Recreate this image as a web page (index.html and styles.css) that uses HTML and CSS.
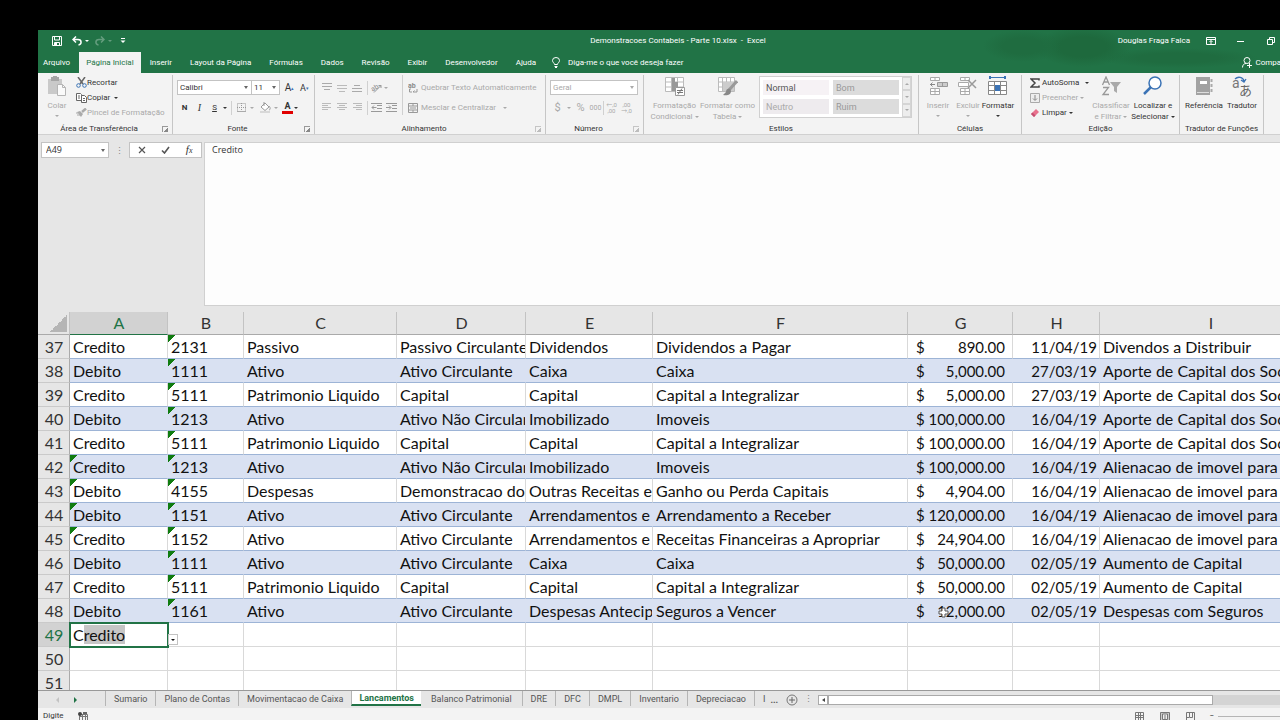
FILE: index.html
```html
<!DOCTYPE html>
<html lang="pt-BR">
<head>
  <meta charset="UTF-8" />
  <meta name="viewport" content="width=device-width, initial-scale=1.0"/>
  <title>Demonstracoes Contabeis - Parte 10.xlsx - Excel</title>
  <link rel="stylesheet" href="styles.css">
</head>
<body>
<div class="app">

  <header class="top">
    <div class="titlebar">
      <div class="quick">
        <button aria-label="Salvar"><svg width="10" height="10" viewBox="0 0 10 10"><path d="M.5.5h9v9h-9zM2.500.5v3.500h5V.5M2.500 9.500V6.500h5v3" fill="none" stroke="#fff"/><path d="M3 7h2v2H3z" fill="#fff"/></svg></button>
        <button aria-label="Desfazer"><svg width="10" height="10" viewBox="0 0 10 10"><path d="M4 .5L1 3.500l3 3M1.500 3.500h4.500c4 0 4 5 .5 5.500" fill="none" stroke="#fff" stroke-width="1.500"/></svg></button><i class="arr"></i>
        <button class="faded redo" aria-label="Refazer"><svg width="10" height="10" viewBox="0 0 10 10"><path d="M6 .5l3 3-3 3M8.500 3.500H4C0 3.500 0 8.500 3.500 9" fill="none" stroke="#fff" stroke-width="1.500"/></svg></button><i class="arr faded"></i>
        <button class="more" aria-label="Personalizar"><svg width="6" height="6" viewBox="0 0 6 6"><path d="M1 .5h4" stroke="#fff"/><path d="M.5 2.500h5L3 5z" fill="#fff"/></svg></button>
      </div>
      <div class="title">Demonstracoes Contabeis - Parte 10.xlsx&nbsp; -&nbsp; Excel</div>
      <div class="window">
        <span class="user">Douglas Fraga Falca</span>
        <button aria-label="Opções da faixa"><svg width="10" height="8" viewBox="0 0 10 8"><path d="M.5.5h9v7h-9zM.5 2.500h9M5 7V3.500M3.500 5L5 3.500 6.500 5" fill="none" stroke="#fff"/></svg></button>
        <button aria-label="Minimizar"><svg width="8" height="8" viewBox="0 0 8 8"><path d="M0 4.500h7" stroke="#fff"/></svg></button>
        <button aria-label="Restaurar"><svg width="8" height="8" viewBox="0 0 8 8"><path d="M.5 2.500h5v5h-5zM2.500 2V.5h5v5H6" fill="none" stroke="#fff"/></svg></button>
        <button aria-label="Fechar"><svg width="8" height="8" viewBox="0 0 8 8"><path d="M1 1l6 6M7 1L1 7" stroke="#fff"/></svg></button>
      </div>
    </div>
    <nav class="tabs">
      <button class="file">Arquivo</button>
      <button class="active">Página Inicial</button>
      <button>Inserir</button>
      <button>Layout da Página</button>
      <button>Fórmulas</button>
      <button>Dados</button>
      <button>Revisão</button>
      <button>Exibir</button>
      <button>Desenvolvedor</button>
      <button>Ajuda</button>
      <button class="tell"><svg width="8" height="11" viewBox="0 0 8 11"><path d="M2.500 7.500C2.500 6 .5 5.500.5 3.500a3.500 3 0 0 1 7 0c0 2-2 2.500-2 4zM2.500 9.500h3M3 10.500h2" fill="none" stroke="#fff"/></svg>Diga-me o que você deseja fazer</button>
      <button class="share"><svg width="10" height="11" viewBox="0 0 10 11"><circle cx="5" cy="3.500" r="3" fill="none" stroke="#fff"/><path d="M.5 10.500C.5 8 2 6.500 4 6.500M5 8.500h5M7.500 6v5" fill="none" stroke="#fff"/></svg>Compartilhar</button>
    </nav>
  </header>

  <div class="ribbon">
    <section class="group clipboard">
      <div class="tools">
        <button class="big off"><svg width="20" height="21" viewBox="0 0 20 21"><path d="M1 3h14v15H1z" fill="#c9c9c9"/><path d="M4 1h8v4H4z" fill="#a5a5a5"/><path d="M6 0h4v2H6z" fill="#a5a5a5"/><path d="M10.500 8.500h5l3 3v8h-8z" fill="#fafafa" stroke="#b5b5b5"/><path d="M15.500 8.500v3h3" fill="none" stroke="#b5b5b5"/></svg><span>Colar</span><i class="arr"></i></button>
        <div class="stack">
          <button><svg width="11" height="11" viewBox="0 0 11 11"><path d="M2 0l5 7M9 0L4 7" stroke="#666" stroke-width="1.500"/><circle cx="2.500" cy="8.500" r="1.800" fill="none" stroke="#3b73b5"/><circle cx="8.500" cy="8.500" r="1.800" fill="none" stroke="#3b73b5"/></svg>Recortar</button>
          <button><svg width="11" height="10" viewBox="0 0 11 10"><path d="M.5.5h4l1 1v6h-5zM2 3h2M2 5h2" fill="#fff" stroke="#666"/><path d="M5.500 2.500h3l2 2v5h-5zM7 5.500h2M7 7.500h2" fill="#fff" stroke="#666"/></svg>Copiar<i class="arr wide"></i></button>
          <button class="off"><svg width="11" height="10" viewBox="0 0 11 10"><path d="M1 4l3-1 3 3-2 3z" fill="#aaa"/><path d="M6 4l4-3.500" stroke="#aaa" stroke-width="2.500"/><path d="M0 5h2M1 7h3" stroke="#aaa"/></svg>Pincel de Formatação</button>
        </div>
      </div>
      <footer><span>Área de Transferência</span><button class="launch" aria-label="Mais"></button></footer>
    </section>

    <section class="group font">
      <div class="tools lines">
        <div class="line">
          <label class="combo face"><select aria-label="Fonte"><option>Calibri</option></select></label>
          <label class="combo size"><select aria-label="Tamanho"><option>11</option></select></label>
          <button class="sq grow" aria-label="Aumentar fonte">A<sup>▴</sup></button>
          <button class="sq shrink" aria-label="Diminuir fonte">A<sup>▾</sup></button>
        </div>
        <div class="line">
          <button class="sq"><b>N</b></button>
          <button class="sq"><em>I</em></button>
          <button class="sq"><u>S</u></button><i class="arr"></i>
          <i class="rule"></i>
          <button class="sq off" aria-label="Bordas"><svg width="9" height="9" viewBox="0 0 9 9"><path d="M.5.5h8v8h-8zM4.500 0v9M0 4.500h9" fill="none" stroke="#999" stroke-dasharray="1 1"/><path d="M0 8.500h9" stroke="#aaa"/></svg></button><i class="arr off"></i>
          <button class="sq off" aria-label="Preenchimento"><svg width="11" height="11" viewBox="0 0 11 11"><path d="M1 5l4-4 4 4-4 3.500zM4 0v4" fill="#fff" stroke="#999"/><path d="M9 4c2 2 1 4 0 4" fill="none" stroke="#999"/><path d="M0 9h10v2H0z" fill="#d8d8d8"/></svg></button><i class="arr off"></i>
          <button class="sq color">A</button><i class="arr"></i>
        </div>
      </div>
      <footer><span>Fonte</span><button class="launch" aria-label="Mais"></button></footer>
    </section>

    <section class="group align">
      <div class="tools halves">
        <div class="lines">
          <div class="line off">
            <button class="sq"><svg width="10" height="9" viewBox="0 0 10 9"><path d="M0 .5h10M0 3.500h10M2 6.500h6" stroke="#aaa"/></svg></button>
            <button class="sq"><svg width="10" height="9" viewBox="0 0 10 9"><path d="M0 2.500h10M0 5.500h10M2 8.500h6" stroke="#bbb"/></svg></button>
            <button class="sq"><svg width="10" height="9" viewBox="0 0 10 9"><path d="M2 2.500h6M0 5.500h10M0 8.500h10" stroke="#aaa"/></svg></button>
            <i class="rule"></i>
            <button class="sq"><svg width="12" height="10" viewBox="0 0 12 10"><text x="0" y="7" font-size="7" fill="#888" transform="rotate(-30 4 5)">ab</text><path d="M3 9.500l7-7M7.500 2.500H10V5" fill="none" stroke="#999"/></svg></button><i class="arr"></i>
          </div>
          <div class="line off">
            <button class="sq"><svg width="10" height="9" viewBox="0 0 10 9"><path d="M0 .5h9M0 2.500h6M0 4.500h9M0 6.500h6" stroke="#bbb"/></svg></button>
            <button class="sq"><svg width="10" height="9" viewBox="0 0 10 9"><path d="M0 .5h10M2 2.500h6M0 4.500h10M2 6.500h6" stroke="#bbb"/></svg></button>
            <button class="sq"><svg width="10" height="9" viewBox="0 0 10 9"><path d="M1 .5h9M4 2.500h6M1 4.500h9M4 6.500h6" stroke="#bbb"/></svg></button>
            <i class="rule"></i>
            <button class="sq"><svg width="11" height="9" viewBox="0 0 11 9"><path d="M0 .5h11M6 2.500h5M6 5.500h5M0 8.500h11M1 4.500h4.500M3 2.500l-2 2 2 2" fill="none" stroke="#999"/></svg></button>
            <button class="sq"><svg width="11" height="9" viewBox="0 0 11 9"><path d="M0 .5h11M6 2.500h5M6 5.500h5M0 8.500h11M0 4.500h4.500M3 2.500l2 2-2 2" fill="none" stroke="#999"/></svg></button>
          </div>
        </div>
        <div class="lines wrap">
          <div class="line"><button class="off"><svg width="10" height="10" viewBox="0 0 10 10"><text x="0" y="5" font-size="7" font-weight="700" fill="#888">ab</text><path d="M3 6H1.500v3H4M9 6v3H5M6.500 7.500L5 9" fill="none" stroke="#999"/></svg>Quebrar Texto Automaticamente</button></div>
          <div class="line"><button class="off"><svg width="10" height="10" viewBox="0 0 10 10"><path d="M.5.5h9v9h-9zM0 3h10M0 7h10M5 0v3M5 7v3M2 5h6" fill="none" stroke="#999"/></svg>Mesclar e Centralizar<i class="arr wide"></i></button></div>
        </div>
      </div>
      <footer><span>Alinhamento</span><button class="launch off" aria-label="Mais"></button></footer>
    </section>

    <section class="group number">
      <div class="tools lines">
        <div class="line"><label class="combo general"><select class="off" aria-label="Formato de número"><option>Geral</option></select></label></div>
        <div class="line off">
          <button class="sq money">$</button><i class="arr"></i>
          <button class="sq money">%</button>
          <button class="sq zeros">000</button>
          <i class="rule"></i>
          <button class="sq dec">←,0<br>,00</button>
          <button class="sq dec">,00<br>→,0</button>
        </div>
      </div>
      <footer><span>Número</span><button class="launch off" aria-label="Mais"></button></footer>
    </section>

    <section class="group styles">
      <div class="tools">
        <button class="big off"><svg width="20" height="21" viewBox="0 0 20 21"><path d="M.5 1.500h18v14H.5zM6.500 1v15M12.500 1v15M0 6h18M0 11h18" fill="#fff" stroke="#bbb"/><path d="M7 2h3v4H7zM7 6h6v5H7zM7 11h4v4H7z" fill="#999"/><path d="M10.500 11.500h9v8h-9z" fill="#fff" stroke="#999"/><path d="M12 14.500h6M12 16.500h6M17 12.500l-4 6" stroke="#777"/></svg><span>Formatação<br>Condicional <i class="arr"></i></span></button>
        <button class="big off"><svg width="20" height="21" viewBox="0 0 20 21"><path d="M.5 1.500h16v14H.5zM4.500 1v15M8.500 1v15M12.500 1v15M0 6h17M0 11h17" fill="#fff" stroke="#bbb"/><path d="M5 6h11v9H5z" fill="#ccc"/><path d="M19 5l-8 9" stroke="#999" stroke-width="3"/><path d="M12 13c-2-1-4 0-4 3l-3 3c4 1 8 0 8-4z" fill="#888"/></svg><span>Formatar como<br>Tabela <i class="arr"></i></span></button>
        <div class="gallery">
          <div class="swatches">
            <button class="normal">Normal</button><button class="good">Bom</button>
            <button class="neutral">Neutro</button><button class="good">Ruim</button>
          </div>
          <div class="scroller"><button aria-label="Acima"><i class="arr up"></i></button><button aria-label="Abaixo"><i class="arr"></i></button><button aria-label="Mais"><i class="arr"></i></button></div>
        </div>
      </div>
      <footer><span>Estilos</span></footer>
    </section>

    <section class="group cells">
      <div class="tools">
        <button class="big off"><svg width="20" height="21" viewBox="0 0 20 21"><path d="M2.500 1.500h9v3h-9zM7 1v4M2.500 12.500h9v6h-9zM7 12v7M2 15.500h10" fill="#fff" stroke="#aaa"/><path d="M9.500 6.500h10v4h-10zM14.500 6v5" fill="#ccc" stroke="#999"/><path d="M2 8.500h5M4.500 6.500l-2 2 2 2" fill="none" stroke="#888"/></svg><span>Inserir</span><i class="arr"></i></button>
        <button class="big off"><svg width="20" height="21" viewBox="0 0 20 21"><path d="M2.500 1.500h9v3h-9zM7 1v4M2.500 12.500h9v6h-9zM7 12v7M2 15.500h10M.5 6.500h10v4H.5z" fill="#fff" stroke="#aaa"/><path d="M10 4l8 8M18 4l-8 8" stroke="#999" stroke-width="1.500"/></svg><span>Excluir</span><i class="arr"></i></button>
        <button class="big"><svg width="20" height="21" viewBox="0 0 20 21"><path d="M1 1.500h17M3 0L1.500 1.500 3 3M16 0l1.500 1.500L16 3M1.500 0v3M17.500 0v3" fill="none" stroke="#3b73b5"/><path d="M.5 5.500h18v13H.5zM6.500 5v14M12.500 5v14M0 9.500h18M0 14.500h18" fill="#fff" stroke="#888"/><path d="M7 9h5v6H7z" fill="#3b73b5"/></svg><span>Formatar</span><i class="arr"></i></button>
      </div>
      <footer><span>Células</span></footer>
    </section>

    <section class="group editing">
      <div class="tools">
        <div class="stack">
          <button><svg width="10" height="10" viewBox="0 0 10 10"><path d="M9 2.500V1H1l4 4-4 4h8V7.500" fill="none" stroke="#444" stroke-width="1.500"/></svg>AutoSoma<i class="arr wide"></i></button>
          <button class="off"><svg width="10" height="10" viewBox="0 0 10 10"><path d="M.5.5h9v9h-9z" fill="#eee" stroke="#aaa"/><path d="M5 2v5M3 5.500l2 2 2-2" fill="none" stroke="#888"/></svg>Preencher<i class="arr"></i></button>
          <button><svg width="10" height="10" viewBox="0 0 10 10"><path d="M1 6l5-5 3 3-5 5z" fill="#e8718d"/><path d="M1 6l1.500-1.500 3 3L4 9z" fill="#c44f70"/></svg>Limpar<i class="arr"></i></button>
        </div>
        <button class="big off"><svg width="20" height="21" viewBox="0 0 20 21"><path d="M1.500 9L5 1l3.500 8M3 6h4M2 11.500h5.500L2 18.500h6" fill="none" stroke="#999" stroke-width="1.300"/><path d="M9 6h11l-4 5v6l-3-2v-4z" fill="#aaa"/></svg><span>Classificar<br>e Filtrar <i class="arr"></i></span></button>
        <button class="big"><svg width="20" height="21" viewBox="0 0 20 21"><circle cx="12" cy="7" r="6" fill="#fff" stroke="#3b73b5" stroke-width="1.500"/><path d="M8 11l-7 7" stroke="#3b73b5" stroke-width="2.500"/></svg><span>Localizar e<br>Selecionar <i class="arr"></i></span></button>
      </div>
      <footer><span>Edição</span></footer>
    </section>

    <section class="group translate">
      <div class="tools">
        <button class="big"><svg width="20" height="21" viewBox="0 0 20 21"><path d="M2 1h14v18H2z" fill="#a2a2a2"/><path d="M6 5h7v3H6z" fill="#fff"/><path d="M3 16.500h12" stroke="#ddd"/><path d="M17.500 3v3M17.500 8v3M17.500 13v3" stroke="#aaa" stroke-width="2"/></svg><span>Referência</span></button>
        <button class="big"><svg width="22" height="21" viewBox="0 0 22 21"><text x="1" y="12" font-size="14" fill="#777">a</text><text x="8" y="19" font-size="13" fill="#666">あ</text><path d="M4 3c3-3 8-2 9 2M10 4l3 2 2-3" fill="none" stroke="#3b73b5" stroke-width="1.300"/></svg><span>Tradutor</span></button>
      </div>
      <footer><span>Tradutor de Funções</span></footer>
    </section>
  </div>

  <div class="formula">
    <label class="combo name"><input type="text" value="A49" aria-label="Caixa de nome"></label>
    <span class="grip">⋮</span>
    <div class="fx">
      <button aria-label="Cancelar"><svg width="8" height="8" viewBox="0 0 8 8"><path d="M1 1l6 6M7 1L1 7" stroke="#555" stroke-width="1.200"/></svg></button>
      <button aria-label="Inserir"><svg width="9" height="8" viewBox="0 0 9 8"><path d="M1 4.500l2.500 2.500L8 1" fill="none" stroke="#555" stroke-width="1.600"/></svg></button>
      <button aria-label="Inserir função"><em>f<small>x</small></em></button>
    </div>
    <textarea aria-label="Barra de fórmulas">Credito</textarea>
  </div>

  <main class="sheet">
    <table>
      <colgroup><col class="c-row"><col class="c-a"><col class="c-b"><col class="c-c"><col class="c-d"><col class="c-e"><col class="c-f"><col class="c-g"><col class="c-h"><col class="c-i"></colgroup>
      <thead>
        <tr><th class="corner"></th><th class="sel">A</th><th>B</th><th>C</th><th>D</th><th>E</th><th>F</th><th>G</th><th>H</th><th>I</th></tr>
      </thead>
      <tbody>
        <tr class="data"><th>37</th><td>Credito</td><td class="err">2131</td><td>Passivo</td><td>Passivo Circulante</td><td>Dividendos</td><td>Dividendos a Pagar</td><td><div class="cash"><span>$</span><span>890.00</span></div></td><td class="date">11/04/19</td><td>Divendos a Distribuir</td></tr>
        <tr class="data band"><th>38</th><td>Debito</td><td class="err">1111</td><td>Ativo</td><td>Ativo Circulante</td><td>Caixa</td><td>Caixa</td><td><div class="cash"><span>$</span><span>5,000.00</span></div></td><td class="date">27/03/19</td><td>Aporte de Capital dos Socios</td></tr>
        <tr class="data"><th>39</th><td>Credito</td><td class="err">5111</td><td>Patrimonio Liquido</td><td>Capital</td><td>Capital</td><td>Capital a Integralizar</td><td><div class="cash"><span>$</span><span>5,000.00</span></div></td><td class="date">27/03/19</td><td>Aporte de Capital dos Socios</td></tr>
        <tr class="data band"><th>40</th><td>Debito</td><td class="err">1213</td><td>Ativo</td><td>Ativo Não Circulante</td><td>Imobilizado</td><td>Imoveis</td><td><div class="cash"><span>$</span><span>100,000.00</span></div></td><td class="date">16/04/19</td><td>Aporte de Capital dos Socios</td></tr>
        <tr class="data"><th>41</th><td>Credito</td><td class="err">5111</td><td>Patrimonio Liquido</td><td>Capital</td><td>Capital</td><td>Capital a Integralizar</td><td><div class="cash"><span>$</span><span>100,000.00</span></div></td><td class="date">16/04/19</td><td>Aporte de Capital dos Socios</td></tr>
        <tr class="data band"><th>42</th><td class="err">Credito</td><td class="err">1213</td><td>Ativo</td><td>Ativo Não Circulante</td><td>Imobilizado</td><td>Imoveis</td><td><div class="cash"><span>$</span><span>100,000.00</span></div></td><td class="date">16/04/19</td><td>Alienacao de imovel para</td></tr>
        <tr class="data"><th>43</th><td class="err">Debito</td><td class="err">4155</td><td>Despesas</td><td>Demonstracao do</td><td>Outras Receitas e</td><td>Ganho ou Perda Capitais</td><td><div class="cash"><span>$</span><span>4,904.00</span></div></td><td class="date">16/04/19</td><td>Alienacao de imovel para</td></tr>
        <tr class="data band"><th>44</th><td class="err">Debito</td><td class="err">1151</td><td>Ativo</td><td>Ativo Circulante</td><td>Arrendamentos e</td><td>Arrendamento a Receber</td><td><div class="cash"><span>$</span><span>120,000.00</span></div></td><td class="date">16/04/19</td><td>Alienacao de imovel para</td></tr>
        <tr class="data"><th>45</th><td class="err">Credito</td><td class="err">1152</td><td>Ativo</td><td>Ativo Circulante</td><td>Arrendamentos e</td><td>Receitas Financeiras a Apropriar</td><td><div class="cash"><span>$</span><span>24,904.00</span></div></td><td class="date">16/04/19</td><td>Alienacao de imovel para</td></tr>
        <tr class="data band"><th>46</th><td>Debito</td><td class="err">1111</td><td>Ativo</td><td>Ativo Circulante</td><td>Caixa</td><td>Caixa</td><td><div class="cash"><span>$</span><span>50,000.00</span></div></td><td class="date">02/05/19</td><td>Aumento de Capital</td></tr>
        <tr class="data"><th>47</th><td>Credito</td><td class="err">5111</td><td>Patrimonio Liquido</td><td>Capital</td><td>Capital</td><td>Capital a Integralizar</td><td><div class="cash"><span>$</span><span>50,000.00</span></div></td><td class="date">02/05/19</td><td>Aumento de Capital</td></tr>
        <tr class="data band"><th>48</th><td>Debito</td><td class="err">1161</td><td>Ativo</td><td>Ativo Circulante</td><td>Despesas Antecip</td><td>Seguros a Vencer</td><td><div class="cash"><span>$</span><span class="hover">12,000.00<svg class="cursor" width="11" height="11" viewBox="0 0 11 11"><path d="M4 1h3v3h3v3H7v3H4V7H1V4h3z" fill="#fff" stroke="#555"/></svg></span></div></td><td class="date">02/05/19</td><td>Despesas com Seguros</td></tr>
        <tr><th class="sel">49</th><td class="editing-cell">C<mark>redito</mark><button class="drop" aria-label="Lista"><i class="arr"></i></button></td><td></td><td></td><td></td><td></td><td></td><td></td><td></td><td></td></tr>
        <tr><th>50</th><td></td><td></td><td></td><td></td><td></td><td></td><td></td><td></td><td></td></tr>
        <tr><th>51</th><td></td><td></td><td></td><td></td><td></td><td></td><td></td><td></td><td></td></tr>
      </tbody>
    </table>
  </main>

  <div class="sheetbar">
    <div class="nav"><button class="prev" aria-label="Anterior"></button><button class="next" aria-label="Próxima"></button></div>
    <div class="sheettabs">
      <button>Sumario</button>
      <button>Plano de Contas</button>
      <button>Movimentacao de Caixa</button>
      <button class="active">Lancamentos</button>
      <button>Balanco Patrimonial</button>
      <button>DRE</button>
      <button>DFC</button>
      <button>DMPL</button>
      <button>Inventario</button>
      <button>Depreciacao</button>
      <button class="cut">I</button>
    </div>
    <b class="dots">...</b>
    <button class="add" aria-label="Nova planilha"><svg width="12" height="12" viewBox="0 0 12 12"><circle cx="6" cy="6" r="5" fill="none" stroke="#777"/><path d="M6 3v6M3 6h6" stroke="#666"/></svg></button>
    <span class="grip">⋮</span>
    <div class="scroll"><button class="left" aria-label="Rolar"></button><div class="thumb"></div></div>
  </div>

  <div class="status">
    <span>Digite</span>
    <svg width="10" height="9" viewBox="0 0 10 9"><path d="M1.500 2.500h8v6h-8zM1 4.500h9M4.500 3v6M7.500 3v6" fill="none" stroke="#777"/><circle cx="2" cy="2" r="2" fill="#444"/><path d="M5 1h4" stroke="#666" stroke-width="2"/></svg>
    <div class="views">
      <button aria-label="Normal"><svg width="9" height="9" viewBox="0 0 9 9"><path d="M.5.5h8v8h-8zM3.500 0v9M5.500 0v9M0 3.500h9M0 5.500h9" fill="none" stroke="#777"/></svg></button>
      <button aria-label="Layout"><svg width="10" height="9" viewBox="0 0 10 9"><path d="M.5.5h9v8h-9z" fill="#ccc" stroke="#777"/><path d="M2.500 2v5.500h5V2zM4 4h2M4 6h2" fill="#eee" stroke="#777"/></svg></button>
      <button aria-label="Quebra de página"><svg width="9" height="9" viewBox="0 0 9 9"><path d="M.5.5h8v8h-8zM3.500 0v5.500h3V0M0 5.500h3" fill="none" stroke="#777"/></svg></button>
      <button class="minus" aria-label="Reduzir">−</button>
      <i class="zoomline"></i>
    </div>
  </div>
</div>
</body>
</html>
```
FILE: styles.css
```css
* {
  box-sizing: border-box;
}
body {
  margin: 0;
  padding: 30px 0 0 38px;
  height: 100vh;
  background: #000;
  overflow: hidden;
  font-family: Roboto, "Noto Sans CJK JP", sans-serif;
  font-size: 8px;
  line-height: 10px;
  color: #333;
}
button, select, input, textarea {
  font: inherit;
  color: inherit;
  border: none;
  background: none;
  padding: 0;
  margin: 0;
  border-radius: 0;
  outline: none;
}
button {
  white-space: nowrap;
  display: flex;
  align-items: center;
}
svg {
  flex: none;
}

/* the window runs past the right edge of the screen */
.app {
  width: calc(100% + 38px);
  height: 100%;
  display: flex;
  flex-direction: column;
  background: #e6e6e6;
}

/* title bar and tabs */
.top {
  color: #fff;
  background:
    radial-gradient(ellipse 40px 16px at 985px 16px, #1f6c40 50%, transparent),
    radial-gradient(ellipse 48px 20px at 1045px 17px, #1e693d 50%, transparent),
    radial-gradient(ellipse 80px 10px at 1140px 28px, #1f6c40 50%, transparent),
    #217346;
}
.titlebar {
  display: grid;
  grid-template-columns: 1fr auto 1fr;
  align-items: center;
  height: 22px;
}
.quick, .window {
  display: flex;
  align-items: center;
}
.quick {
  padding-left: 14px;
}
.quick button + button {
  margin-left: 10px;
}
.quick .arr {
  margin: 0 6px 0 3px;
}
.quick .more {
  margin-left: 2px;
}
.faded {
  opacity: 0.3;
}
.window {
  justify-content: flex-end;
  padding-right: 2px;
}
.window button {
  width: 30px;
  justify-content: center;
}
.window .user {
  margin-right: 6px;
}
.tabs {
  display: flex;
  height: 21px;
}
.tabs button {
  padding: 0 9px;
}
.tabs .file {
  padding: 0 9px 0 5px;
}
.tabs .active {
  background: #f3f3f3;
  color: #217346;
  padding: 0 7px;
}
.tabs .tell {
  gap: 8px;
  padding-left: 7px;
}
.tabs .share {
  margin-left: auto;
  padding-right: 16px;
  gap: 3px;
}

/* ribbon */
.ribbon {
  flex: none;
  display: flex;
  height: 62px;
  background: #f3f3f3;
  border-bottom: 1px solid #d0d0d0;
}
.group {
  flex: none;
  display: flex;
  flex-direction: column;
  margin: 2px 0 0;
  border-right: 1px solid #c6c6c6;
}
.group footer {
  display: flex;
  align-items: center;
  height: 10px;
}
.group footer span {
  flex: 1;
  text-align: center;
}
.launch {
  width: 6px;
  height: 6px;
  margin: 0 4px 0 2px;
  border: 1px solid #999;
  border-width: 1px 0 0 1px;
  background: linear-gradient(135deg, transparent 55%, #888 55%);
}
.launch.off {
  opacity: 0.5;
}
.tools {
  flex: 1;
  display: flex;
  align-items: flex-start;
}
.off {
  color: #a9a9a9;
}
.arr {
  display: inline-block;
  flex: none;
  border: 2px solid transparent;
  border-top-color: currentColor;
  border-bottom: none;
}
.arr.up {
  border: 2px solid transparent;
  border-bottom-color: currentColor;
  border-top: none;
}
.big .arr {
  vertical-align: middle;
}
.wide {
  margin-left: 4px;
}
.big {
  flex-direction: column;
  width: 100%;
  padding-top: 1px;
  line-height: 11px;
  text-align: center;
}
.big svg {
  margin-bottom: 3px;
}
.big > .arr {
  margin-top: 4px;
}
.stack button {
  height: 15px;
  gap: 2px;
}
.lines {
  display: flex;
  flex-direction: column;
  gap: 5px;
  padding-top: 5px;
}
.line {
  display: flex;
  align-items: center;
  height: 15px;
}
.sq {
  width: 15px;
  height: 15px;
  justify-content: center;
}
.rule {
  width: 1px;
  height: 14px;
  background: #d0d0d0;
}
.combo {
  position: relative;
  display: flex;
  height: 15px;
  border: 1px solid #c3c3c3;
  background: #fff;
}
.combo::after {
  content: "";
  position: absolute;
  right: 3px;
  top: 5px;
  border: 2px solid transparent;
  border-top: 3px solid #666;
  border-bottom: none;
}
.combo select, .combo input {
  width: 100%;
  padding-left: 2px;
  appearance: none;
}

.clipboard { width: 135px; }
.clipboard .big { width: 38px; }
.clipboard .stack button { gap: 0; }
.font { width: 142px; }
.font .tools, .number .tools { padding-left: 4px; }
.face { width: 75px; }
.size { width: 28px; border-left: none; }
.grow { font-size: 10px; margin-left: 2px; }
.shrink { font-size: 9px; }
.sq sup { color: #3b73b5; font-size: 5px; }
.font .arr { margin: 0 4px 0 1px; }
.font .rule { margin-right: 2px; }
.font .sq em { font-family: "Liberation Serif", serif; font-size: 10px; }
.font .color {
  width: 11px;
  height: 12px;
  border-bottom: 3px solid #e00000;
  font-weight: 700;
  font-size: 9px;
}

.align { width: 231px; }
.halves .lines:first-child { width: 87px; padding-left: 4px; }
.align .rule { margin: 0 1px 0 3px; }
.align .wrap {
  border-left: 1px solid #d0d0d0;
  padding-left: 5px;
}
.wrap button { gap: 3px; }

.number { width: 98px; }
.general { width: 88px; }
.general::after { border-top-color: #aaa; }
.money { font-size: 11px; }
.zeros { font-size: 7px; }
.number .line .arr { margin: 0 2px; }
.dec {
  font-size: 6px;
  line-height: 6px;
}

.styles { width: 275px; }
.styles .big { width: 53px; }
.styles .big:first-child { margin-left: 4px; }
.gallery {
  display: flex;
  margin: 1px 0 0 5px;
  height: 42px;
  background: #fff;
  border: 1px solid #d0d0d0;
}
.swatches {
  display: grid;
  grid-template-columns: 66px 66px;
  grid-auto-rows: 15px;
  gap: 4px;
  padding: 3px;
}
.swatches button {
  padding-left: 3px;
  font-size: 9px;
}
.swatches .normal { background: #f6f2f5; color: #555; }
.swatches .neutral { background: #eeebee; color: #aaa; }
.swatches .good { background: #dcdcdc; color: #999; }
.scroller {
  display: flex;
  flex-direction: column;
  width: 9px;
  background: #ededed;
}
.scroller button {
  flex: 1;
  justify-content: center;
  color: #aaa;
  border: 1px solid #d5d5d5;
}

.cells { width: 103px; }
.cells .tools { padding: 0 8px 0 4px; }
.cells .big { width: 30px; }
.editing { width: 158px; }
.editing .stack { width: 66px; padding-left: 8px; }
.editing .big { width: 46px; }
.editing .big:last-child { width: 38px; }
.translate { width: 84px; }
.translate .tools { padding: 0 2px 0 5px; }

/* formula bar */
.formula {
  flex: none;
  display: flex;
  align-items: flex-start;
  height: 177px;
  padding: 7px 0 7px 3px;
  font-family: "Open Sans", sans-serif;
  font-size: 9px;
}
.formula .name {
  width: 68px;
  height: 16px;
}
.name input {
  padding-left: 4px;
}
.name::after {
  top: 6px;
}
.grip {
  width: 20px;
  line-height: 17px;
  text-align: center;
  color: #888;
}
.fx {
  display: grid;
  grid-template-columns: 1fr 1fr 1fr;
  width: 73px;
  height: 16px;
  margin-right: 2px;
  background: #fff;
  border: 1px solid #c3c3c3;
}
.fx button {
  justify-content: center;
}
.fx em {
  font-family: "Liberation Serif", serif;
  font-size: 11px;
}
.fx small {
  font-size: 8px;
}
.formula textarea {
  flex: 1;
  height: 164px;
  padding: 2px 7px;
  background: #fdfdfd;
  border: 1px solid #d0d0d0;
  resize: none;
}

/* grid */
.sheet {
  flex: 1;
  min-height: 0;
  overflow: hidden;
  background: #fff;
}
table {
  width: 1284px;
  table-layout: fixed;
  border-collapse: separate;
  border-spacing: 0;
  font-family: Lato, sans-serif;
  font-size: 16px;
  line-height: 22px;
  color: #111;
}
.c-row { width: 32px; }
.c-a { width: 98px; }
.c-b { width: 76px; }
.c-c { width: 153px; }
.c-d { width: 129px; }
.c-e { width: 127px; }
.c-f { width: 255px; }
.c-g { width: 105px; }
.c-h { width: 87px; }
.c-i { width: 222px; }
th, td {
  height: 24px;
  padding: 0 2px 0 3px;
  border-right: 1px solid #d9d9d9;
  border-bottom: 1px solid #d9d9d9;
  white-space: nowrap;
  overflow: hidden;
  text-align: left;
}
th {
  background: #e6e6e6;
  font-weight: 400;
  text-align: center;
  color: #333;
}
thead th {
  height: 23px;
  border-right-color: #c3c3c3;
  border-bottom-color: #aaa;
}
thead .sel {
  border-bottom-color: #217346;
}
.sel {
  background: #d2d2d2;
  color: #217346;
}
.corner {
  background: linear-gradient(135deg, transparent 50%, #b5b5b5 50%) 12px 3px / 17px 17px no-repeat #e6e6e6;
}
tbody th {
  border-right-color: #aaa;
  border-bottom-color: #cacaca;
}
.data td {
  border-bottom-color: #9db4d6;
}
.band td {
  background-color: #d9e1f2;
  border-right-color: #d9e1f2;
}
.data .err {
  background-image: linear-gradient(135deg, #107c10 50%, transparent 50%);
  background-size: 8px 8px;
  background-repeat: no-repeat;
}
.date, .cash {
  font-size: 15px;
}
.date {
  text-align: right;
}
.cash {
  display: flex;
  justify-content: space-between;
  padding: 0 5px;
}
.hover {
  position: relative;
}
.cursor {
  position: absolute;
  left: 1px;
  top: 7px;
}
.editing-cell {
  position: relative;
  overflow: visible;
  outline: 2px solid #217346;
  outline-offset: -1px;
}
mark {
  background: #c6c6c6;
  color: inherit;
}
.drop {
  position: absolute;
  right: -11px;
  bottom: 1px;
  width: 10px;
  height: 11px;
  justify-content: center;
  background: #fff;
  border: 1px solid #c3c3c3;
}

/* sheet tabs */
.sheetbar {
  flex: none;
  display: flex;
  align-items: center;
  height: 18px;
  border-top: 1px solid #999;
  font-size: 9px;
  color: #555;
}
.nav {
  display: flex;
  width: 67px;
  padding-left: 18px;
  gap: 15px;
}
.prev, .next, .left {
  border: 3px solid transparent;
}
.prev { border-right-color: #c3c3c3; border-left: none; }
.next { border-left-color: #217346; border-right: none; }
.sheettabs {
  display: flex;
  align-self: stretch;
}
.sheettabs button {
  padding: 0 8px;
  margin-bottom: 2px;
  border-left: 1px solid #b5b5b5;
}
.sheettabs .active {
  background: #fff;
  color: #217346;
  font-weight: 700;
  padding: 0 7px;
  border-bottom: 2px solid #217346;
}
.sheettabs .active + button {
  border-left: none;
  padding: 0 10px;
}
.sheettabs .cut {
  padding-right: 5px;
}
.dots {
  margin-right: 8px;
}
.scroll {
  flex: 1;
  display: flex;
  height: 10px;
  background: #d4d4d4;
}
.scroll .left {
  width: 10px;
  background: #fff;
  border: 1px solid #aaa;
  justify-content: center;
}
.left::after {
  content: "";
  border: 2px solid transparent;
  border-right: 3px solid #444;
  border-left: none;
}
.thumb {
  width: 77%;
  background: #fff;
  border: 1px solid #aaa;
}
.status {
  flex: none;
  display: flex;
  align-items: center;
  gap: 14px;
  height: 12px;
  padding: 4px 0 0 5px;
  background: #f3f3f3;
}
.views {
  display: flex;
  align-items: center;
  gap: 16px;
  margin-left: auto;
}
.views .minus {
  margin-right: -12px;
  margin-left: -2px;
}
.zoomline {
  width: 100px;
  height: 1px;
  background: #b5b5b5;
}
```
